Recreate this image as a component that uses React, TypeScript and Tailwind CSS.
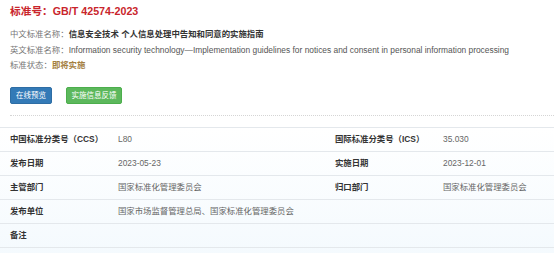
import React from "react";

const rows: { l1: string; v1: string; l2?: string; v2?: string }[] = [
  { l1: "中国标准分类号（CCS）", v1: "L80", l2: "国际标准分类号（ICS）", v2: "35.030" },
  { l1: "发布日期", v1: "2023-05-23", l2: "实施日期", v2: "2023-12-01" },
  { l1: "主管部门", v1: "国家标准化管理委员会", l2: "归口部门", v2: "国家标准化管理委员会" },
  { l1: "发布单位", v1: "国家市场监督管理总局、国家标准化管理委员会" },
  { l1: "备注", v1: "" },
];

export default function App() {
  return (
    <div className="w-[554px] h-[253px] overflow-hidden bg-white font-['Liberation_Sans','Noto_Sans_CJK_SC',sans-serif]">
      <div className="pl-[10px]">
        <div className="h-[22px] flex items-center text-[10.7px] font-bold text-[#c9252c]">
          标准号：GB/T 42574-2023
        </div>
        <div className="mt-[5px] text-[8.4px] leading-[15.5px] text-[#777]">
          <div className="whitespace-nowrap">
            中文标准名称：<span className="font-bold text-[#333]">信息安全技术 个人信息处理中告知和同意的实施指南</span>
          </div>
          <div className="whitespace-nowrap">
            英文标准名称：
            <span className="text-[#555]">
              Information security technology—Implementation guidelines for notices and consent in personal information processing
            </span>
          </div>
          <div className="whitespace-nowrap">
            标准状态：<span className="font-bold text-[#a4803f]">即将实施</span>
          </div>
        </div>
        <div className="mt-[13.5px] flex gap-[14px]">
          <div className="w-[42px] h-[17px] rounded-[2px] bg-[#337ab7] border border-[#2e6da4] text-white text-[7.5px] flex items-center justify-center">
            在线预览
          </div>
          <div className="w-[56px] h-[17px] rounded-[2px] bg-[#5cb85c] border border-[#4cae4c] text-white text-[7.5px] flex items-center justify-center">
            实施信息反馈
          </div>
        </div>
        <div className="mt-[11px] border-t border-dotted border-[#d5d5d5]" />
      </div>
      <div className="mt-[11px] border-t border-[#e4e8ec] bg-gradient-to-b from-white to-[#eef7fd] h-[200px]">
        {rows.map((r, i) => (
          <div
            key={i}
            className="h-[24px] border-b border-[#e4e8ec] pl-[10px] grid grid-cols-[108px_217px_108px_1fr] items-center text-[8.4px] whitespace-nowrap"
          >
            <div className="font-bold text-[#333]">{r.l1}</div>
            <div className={r.l2 ? "text-[#666]" : "col-span-3 text-[#666]"}>{r.v1}</div>
            {r.l2 && <div className="font-bold text-[#333]">{r.l2}</div>}
            {r.l2 && <div className="text-[#666]">{r.v2}</div>}
          </div>
        ))}
      </div>
    </div>
  );
}
